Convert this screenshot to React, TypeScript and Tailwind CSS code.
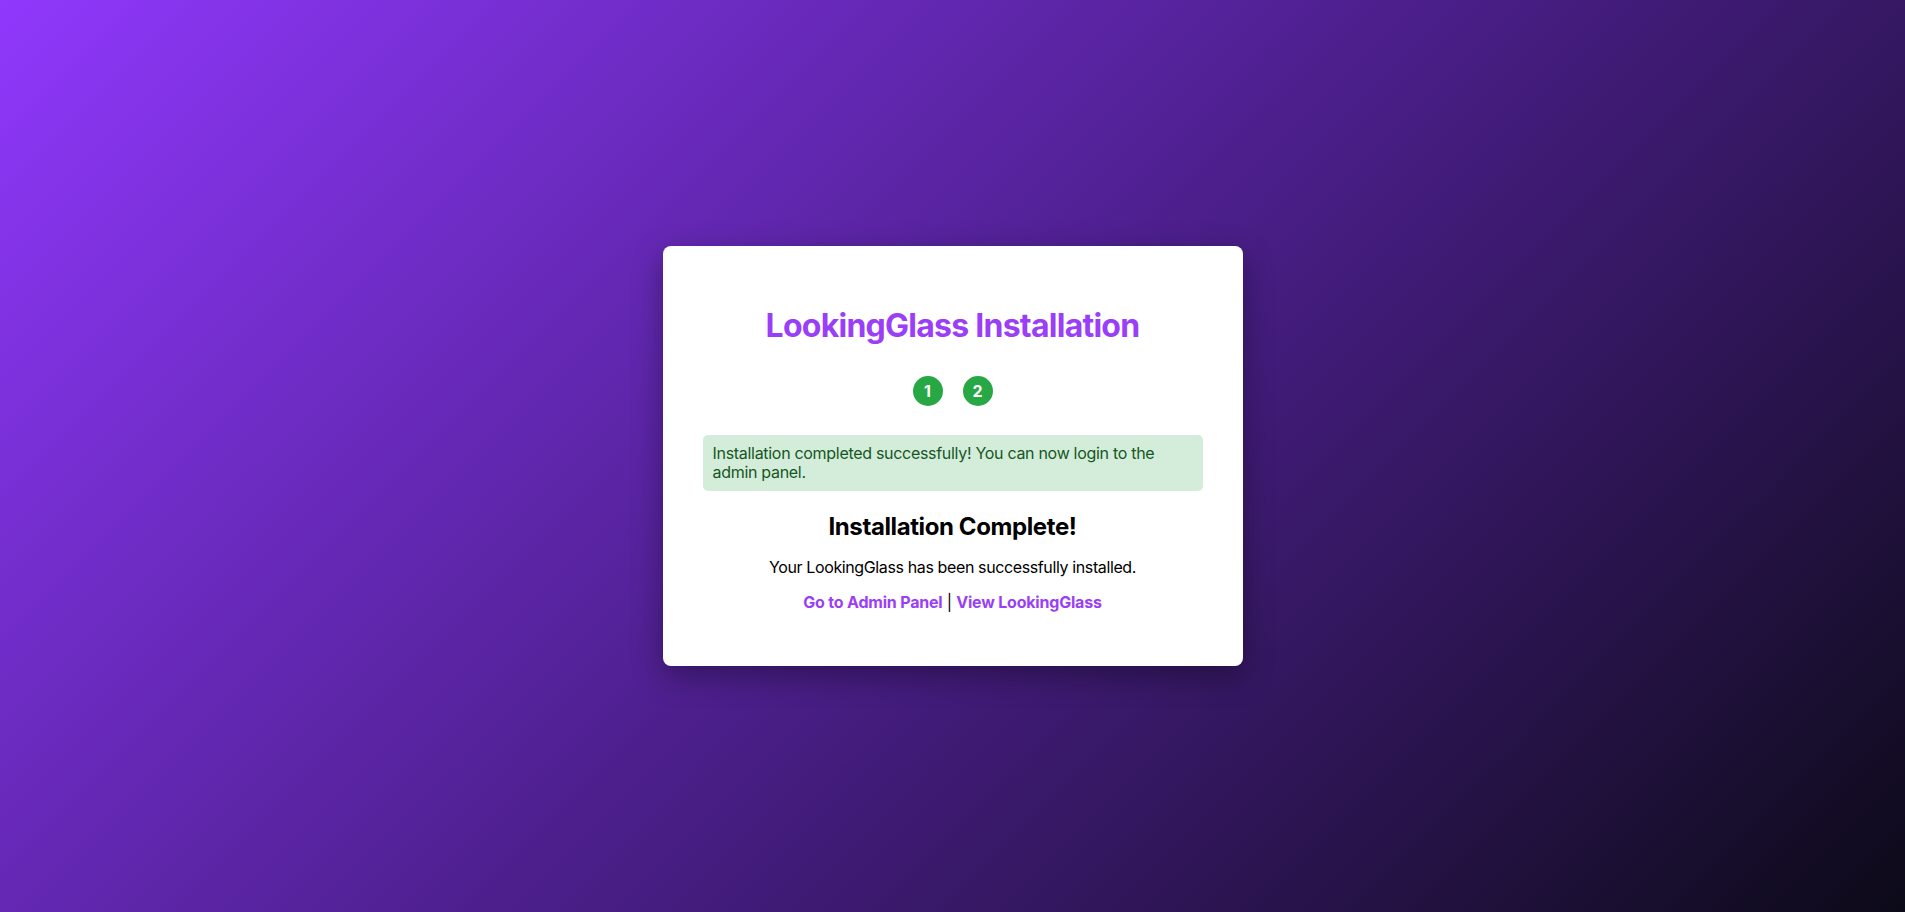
import React from 'react';

const steps = [1, 2];

export default function App() {
  return (
    <div
      className="min-h-screen w-full flex items-center justify-center bg-[linear-gradient(135deg,#9038fc_0%,#4c1f8c_50%,#0c0a18_100%)]"
      style={{ fontFamily: 'Inter, "Noto Sans", sans-serif' }}
    >
      <div className="w-[580px] bg-white rounded-lg p-10 shadow-[0_10px_30px_rgba(0,0,0,0.35)] text-center text-black">
        <h1 className="mt-5 text-[32px] leading-[39px] font-bold text-[#9a3ef8] tracking-[-0.75px]">
          LookingGlass Installation
        </h1>

        {/* step indicators */}
        <div className="mt-[31px] flex justify-center gap-5">
          {steps.map((n) => (
            <div
              key={n}
              className="w-[30px] h-[30px] rounded-full bg-[#28a745] text-white font-bold text-[16px] flex items-center justify-center"
            >
              {n}
            </div>
          ))}
        </div>

        <div className="mt-[29px] rounded-[5px] bg-[#d4edda] text-[#155724] text-left px-[10px] py-[9px] text-[16px] leading-[19px] tracking-[-0.3px]">
          Installation completed successfully! You can now login to the admin panel.
        </div>

        <h2 className="mt-[21px] text-[24px] leading-[29px] font-bold tracking-[-0.4px]">Installation Complete!</h2>
        <p className="mt-[17px] text-[16px] leading-[19px] tracking-[-0.38px]">
          Your LookingGlass has been successfully installed.
        </p>
        <p className="mt-4 mb-[14px] text-[16px] leading-[19px] tracking-[-0.2px]">
          <a href="#" className="font-bold text-[#9a3ef8]">
            Go to Admin Panel
          </a>{' '}
          |{' '}
          <a href="#" className="font-bold text-[#9a3ef8]">
            View LookingGlass
          </a>
        </p>
      </div>
    </div>
  );
}
